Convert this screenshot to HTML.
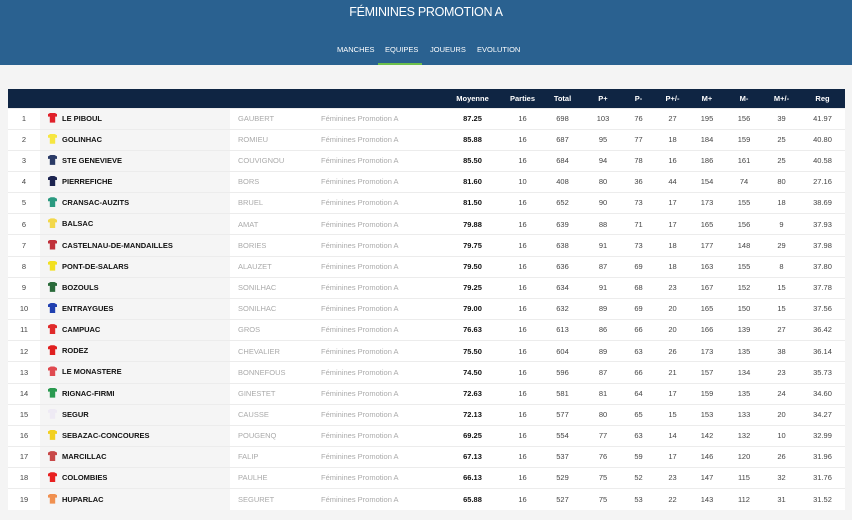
<!DOCTYPE html>
<html><head><meta charset="utf-8"><style>
*{margin:0;padding:0;box-sizing:border-box}
body{width:852px;height:520px;background:#f4f4f4;font-family:"Liberation Sans",sans-serif;overflow:hidden;position:relative}
.hdr{position:absolute;left:0;top:0;width:852px;height:65px;background:#2a6190}
.title{position:absolute;top:5px;width:852px;text-align:center;color:#fff;font-size:12.5px;letter-spacing:-0.3px}
.nav{position:absolute;top:45px;left:0;width:852px;font-size:7.5px;color:#fff}
.nav span{position:absolute}
.ul{position:absolute;left:378px;top:63px;width:44px;height:2px;background:#6cbf4a}
table{position:absolute;left:8px;top:89px;width:837px;border-collapse:collapse;table-layout:fixed;font-size:7.5px;line-height:1}
th{background:#0f2543;color:#fff;height:19px;font-weight:bold;text-align:center}
td{height:21.16px;background:#fff;border-top:1px solid #ececec;text-align:center;color:#444;vertical-align:middle}
td.t{background:#f5f5f5;text-align:left;font-weight:bold;color:#111;padding-left:8px}
td.p{text-align:left;color:#aaa;padding-left:8px}
td.l{text-align:left;color:#aaa;padding-left:8px}
td.m{font-weight:bold;color:#111}
.j{display:inline-block;width:9px;height:10px;vertical-align:middle;margin:-2px 5px 0 0;clip-path:polygon(0 15%,30% 0,70% 0,100% 15%,100% 40%,80% 40%,80% 100%,20% 100%,20% 40%,0 40%)}
</style></head><body>
<div class="hdr">
<div class="title">FÉMININES PROMOTION A</div>
<div class="nav"><span style="left:337px">MANCHES</span><span style="left:385px">EQUIPES</span><span style="left:430px">JOUEURS</span><span style="left:477px">EVOLUTION</span></div>
<div class="ul"></div>
</div>
<table>
<colgroup><col style="width:32px"><col style="width:190px"><col style="width:83px"><col style="width:127px"><col style="width:65px"><col style="width:35px"><col style="width:45px"><col style="width:36px"><col style="width:35px"><col style="width:33px"><col style="width:36px"><col style="width:38px"><col style="width:37px"><col style="width:45px"></colgroup>
<tr><th></th><th></th><th></th><th></th><th>Moyenne</th><th>Parties</th><th>Total</th><th>P+</th><th>P-</th><th>P+/-</th><th>M+</th><th>M-</th><th>M+/-</th><th>Reg</th></tr>
<tr><td>1</td><td class="t"><i class="j" style="background:#e0202a"></i>LE PIBOUL</td><td class="p">GAUBERT</td><td class="l">Féminines Promotion A</td><td class="m">87.25</td><td>16</td><td>698</td><td>103</td><td>76</td><td>27</td><td>195</td><td>156</td><td>39</td><td>41.97</td></tr>
<tr><td>2</td><td class="t"><i class="j" style="background:#f6e640"></i>GOLINHAC</td><td class="p">ROMIEU</td><td class="l">Féminines Promotion A</td><td class="m">85.88</td><td>16</td><td>687</td><td>95</td><td>77</td><td>18</td><td>184</td><td>159</td><td>25</td><td>40.80</td></tr>
<tr><td>3</td><td class="t"><i class="j" style="background:#2a3a66"></i>STE GENEVIEVE</td><td class="p">COUVIGNOU</td><td class="l">Féminines Promotion A</td><td class="m">85.50</td><td>16</td><td>684</td><td>94</td><td>78</td><td>16</td><td>186</td><td>161</td><td>25</td><td>40.58</td></tr>
<tr><td>4</td><td class="t"><i class="j" style="background:#1c2450"></i>PIERREFICHE</td><td class="p">BORS</td><td class="l">Féminines Promotion A</td><td class="m">81.60</td><td>10</td><td>408</td><td>80</td><td>36</td><td>44</td><td>154</td><td>74</td><td>80</td><td>27.16</td></tr>
<tr><td>5</td><td class="t"><i class="j" style="background:#2a9a80"></i>CRANSAC-AUZITS</td><td class="p">BRUEL</td><td class="l">Féminines Promotion A</td><td class="m">81.50</td><td>16</td><td>652</td><td>90</td><td>73</td><td>17</td><td>173</td><td>155</td><td>18</td><td>38.69</td></tr>
<tr><td>6</td><td class="t"><i class="j" style="background:#f3d84a"></i>BALSAC</td><td class="p">AMAT</td><td class="l">Féminines Promotion A</td><td class="m">79.88</td><td>16</td><td>639</td><td>88</td><td>71</td><td>17</td><td>165</td><td>156</td><td>9</td><td>37.93</td></tr>
<tr><td>7</td><td class="t"><i class="j" style="background:#c0303a"></i>CASTELNAU-DE-MANDAILLES</td><td class="p">BORIES</td><td class="l">Féminines Promotion A</td><td class="m">79.75</td><td>16</td><td>638</td><td>91</td><td>73</td><td>18</td><td>177</td><td>148</td><td>29</td><td>37.98</td></tr>
<tr><td>8</td><td class="t"><i class="j" style="background:#f2e020"></i>PONT-DE-SALARS</td><td class="p">ALAUZET</td><td class="l">Féminines Promotion A</td><td class="m">79.50</td><td>16</td><td>636</td><td>87</td><td>69</td><td>18</td><td>163</td><td>155</td><td>8</td><td>37.80</td></tr>
<tr><td>9</td><td class="t"><i class="j" style="background:#2a6a3a"></i>BOZOULS</td><td class="p">SONILHAC</td><td class="l">Féminines Promotion A</td><td class="m">79.25</td><td>16</td><td>634</td><td>91</td><td>68</td><td>23</td><td>167</td><td>152</td><td>15</td><td>37.78</td></tr>
<tr><td>10</td><td class="t"><i class="j" style="background:#2040b0"></i>ENTRAYGUES</td><td class="p">SONILHAC</td><td class="l">Féminines Promotion A</td><td class="m">79.00</td><td>16</td><td>632</td><td>89</td><td>69</td><td>20</td><td>165</td><td>150</td><td>15</td><td>37.56</td></tr>
<tr><td>11</td><td class="t"><i class="j" style="background:#e02a2a"></i>CAMPUAC</td><td class="p">GROS</td><td class="l">Féminines Promotion A</td><td class="m">76.63</td><td>16</td><td>613</td><td>86</td><td>66</td><td>20</td><td>166</td><td>139</td><td>27</td><td>36.42</td></tr>
<tr><td>12</td><td class="t"><i class="j" style="background:#e02020"></i>RODEZ</td><td class="p">CHEVALIER</td><td class="l">Féminines Promotion A</td><td class="m">75.50</td><td>16</td><td>604</td><td>89</td><td>63</td><td>26</td><td>173</td><td>135</td><td>38</td><td>36.14</td></tr>
<tr><td>13</td><td class="t"><i class="j" style="background:#e04a50"></i>LE MONASTERE</td><td class="p">BONNEFOUS</td><td class="l">Féminines Promotion A</td><td class="m">74.50</td><td>16</td><td>596</td><td>87</td><td>66</td><td>21</td><td>157</td><td>134</td><td>23</td><td>35.73</td></tr>
<tr><td>14</td><td class="t"><i class="j" style="background:#2a9a50"></i>RIGNAC-FIRMI</td><td class="p">GINESTET</td><td class="l">Féminines Promotion A</td><td class="m">72.63</td><td>16</td><td>581</td><td>81</td><td>64</td><td>17</td><td>159</td><td>135</td><td>24</td><td>34.60</td></tr>
<tr><td>15</td><td class="t"><i class="j" style="background:#eeeaf4"></i>SEGUR</td><td class="p">CAUSSE</td><td class="l">Féminines Promotion A</td><td class="m">72.13</td><td>16</td><td>577</td><td>80</td><td>65</td><td>15</td><td>153</td><td>133</td><td>20</td><td>34.27</td></tr>
<tr><td>16</td><td class="t"><i class="j" style="background:#f2d020"></i>SEBAZAC-CONCOURES</td><td class="p">POUGENQ</td><td class="l">Féminines Promotion A</td><td class="m">69.25</td><td>16</td><td>554</td><td>77</td><td>63</td><td>14</td><td>142</td><td>132</td><td>10</td><td>32.99</td></tr>
<tr><td>17</td><td class="t"><i class="j" style="background:#c84848"></i>MARCILLAC</td><td class="p">FALIP</td><td class="l">Féminines Promotion A</td><td class="m">67.13</td><td>16</td><td>537</td><td>76</td><td>59</td><td>17</td><td>146</td><td>120</td><td>26</td><td>31.96</td></tr>
<tr><td>18</td><td class="t"><i class="j" style="background:#e82020"></i>COLOMBIES</td><td class="p">PAULHE</td><td class="l">Féminines Promotion A</td><td class="m">66.13</td><td>16</td><td>529</td><td>75</td><td>52</td><td>23</td><td>147</td><td>115</td><td>32</td><td>31.76</td></tr>
<tr><td>19</td><td class="t"><i class="j" style="background:#f09050"></i>HUPARLAC</td><td class="p">SEGURET</td><td class="l">Féminines Promotion A</td><td class="m">65.88</td><td>16</td><td>527</td><td>75</td><td>53</td><td>22</td><td>143</td><td>112</td><td>31</td><td>31.52</td></tr>
</table>
</body></html>
